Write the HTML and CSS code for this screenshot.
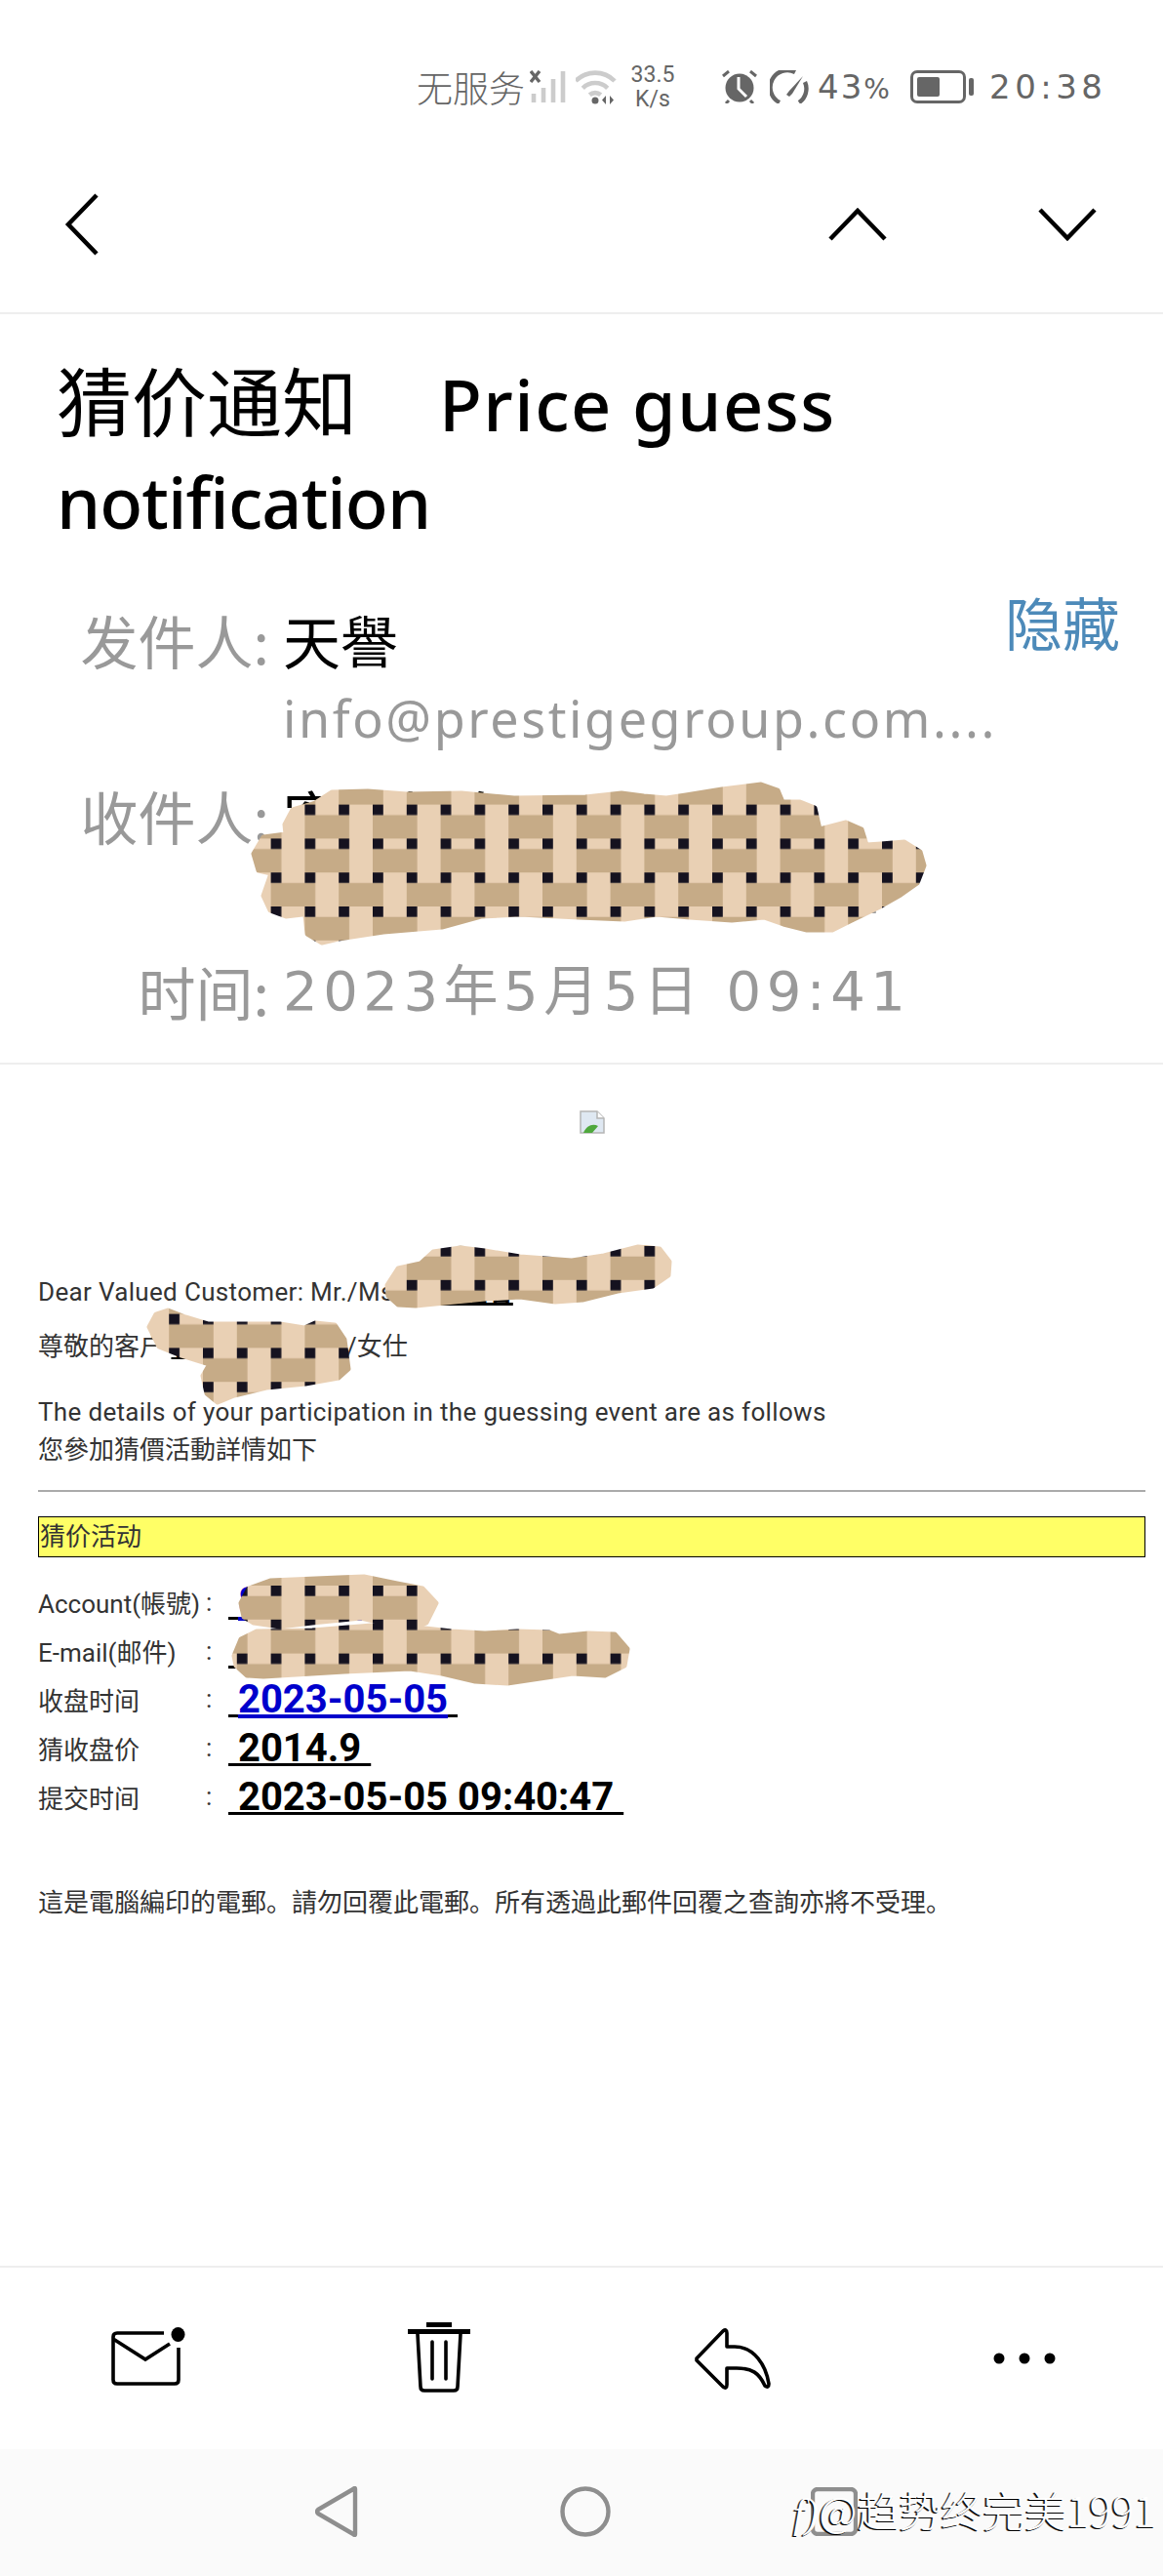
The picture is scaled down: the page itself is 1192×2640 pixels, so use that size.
FILE: index.html
```html
<!DOCTYPE html>
<html lang="zh">
<head>
    <meta charset="UTF-8">
    <title>猜价通知</title>
    <link rel="stylesheet" href="styles.css">
</head>
<body>

    <!-- status bar -->
    <div class="status-bar">
        <span class="carrier">无服务</span>
        <svg class="ic-signal" width="37" height="34" viewBox="0 0 37 34">
            <path d="M1 1l9 11M10 1L1 12" stroke="#666" stroke-width="3.4"/>
            <path d="M4 33V24M14 33V18M24 33V9M34 33V1" stroke="#ccc" stroke-width="4.6"/>
        </svg>
        <svg class="ic-wifi" width="42" height="36" viewBox="0 0 42 36">
            <g fill="none" stroke="#ccc" stroke-width="4.6">
                <path d="M0 12A28 28 0 0 1 40 12"/>
                <path d="M7.300 19.300A18 18 0 0 1 32.700 19.300"/>
                <path d="M14.300 26.300A8.500 8.500 0 0 1 25.700 26.300"/>
            </g>
            <circle cx="20" cy="32" r="3.500" fill="#666"/>
            <path d="M31 27v9l-4-4.500zM35 27v9l4-4.500z" fill="#666"/>
        </svg>
        <div class="speed"><span>33.5</span><span>K/s</span></div>
        <svg class="ic-alarm" width="36" height="34" viewBox="0 0 36 34">
            <path d="M1 6l6-5M35 6l-6-5M7 31l-3 3M29 31l3 3" stroke="#666" stroke-width="3"/>
            <circle cx="18" cy="18" r="14.500" fill="#666"/>
            <path d="M17 7v12l8 8" fill="none" stroke="#fff" stroke-width="3"/>
        </svg>
        <svg class="ic-gauge" width="40" height="34" viewBox="0 0 40 34">
            <path d="M10 33A17 17 0 0 1 26 2M36 12A17 17 0 0 1 30 33" fill="none" stroke="#666" stroke-width="4.400"/>
            <path d="M34 6L20 21l-3 4 3 2 3-3z" fill="#666"/>
        </svg>
        <span class="pct">43<small>%</small></span>
        <div class="battery"><div class="battery-fill"></div></div>
        <div class="battery-nub"></div>
        <span class="clock">20:38</span>
    </div>

    <!-- top nav -->
    <div class="top-nav">
        <svg width="36" height="64" viewBox="0 0 36 64">
            <path d="M33 2L4 32l29 30" fill="none" stroke="#000" stroke-width="4.500"/>
        </svg>
        <div class="top-nav-right">
            <svg width="60" height="34" viewBox="0 0 60 34">
                <path d="M2 32L30 3l28 29" fill="none" stroke="#000" stroke-width="4.500"/>
            </svg>
            <svg width="60" height="34" viewBox="0 0 60 34">
                <path d="M2 2l28 29L58 2" fill="none" stroke="#000" stroke-width="4.500"/>
            </svg>
        </div>
    </div>

    <!-- subject and addresses -->
    <div class="mail-head">
        <h1 class="subject"><span class="subject-cn">猜价通知</span>&nbsp;&nbsp;&nbsp;&nbsp;Price guess <span class="subject-tight">notification</span></h1>
        <div class="meta">
            <div class="meta-label">发件人:</div>
            <div class="meta-value">
                <div class="meta-name">天譽</div>
                <div class="meta-mail">info@prestigegroup.com....</div>
            </div>
            <a class="meta-hide">隐藏</a>

            <div class="meta-label">收件人:</div>
            <div class="meta-value">
                <div class="meta-name">客户姓名</div>
                <div class="meta-mail">customers@hotmail.all</div>
            </div>
            <div></div>

            <div class="meta-label meta-time">时间:</div>
            <div class="meta-value meta-date">2023年5月5日 09:41</div>
        </div>
    </div>

    <!-- message body -->
    <div class="mail-body">
        <div class="logo">
            <svg width="26" height="24" viewBox="0 0 26 24">
                <path d="M1 1h17l7 7v15H1z" fill="#dfe8f2" stroke="#b5b5b5" stroke-width="1.500"/>
                <path d="M18 1v7h7" fill="#fff" stroke="#b5b5b5" stroke-width="1.500"/>
                <path d="M4 23c3-8 10-10 15-7l-6 7z" fill="#4fa83d"/>
            </svg>
        </div>
        <p class="line greet">Dear Valued Customer: Mr./Ms <b class="hidden-name">客户姓名</b></p>
        <p class="line greet-cn">尊敬的客戶 <u class="hidden-name-cn">客户姓名</u> 先生/女仕</p>
        <p class="line intro">The details of your participation in the guessing event are as follows</p>
        <p class="line intro-cn">您參加猜價活動詳情如下</p>
        <hr class="rule">
        <div class="banner">猜价活动</div>
        <div class="fields">
            <div class="field-label">Account(帳號)</div><div>:</div>
            <div class="field-value"><u>&nbsp;<a class="blue">88888888</a>&nbsp;</u></div>
            <div class="field-label">E-mail(邮件)</div><div>:</div>
            <div class="field-value"><u>&nbsp;<a class="blue">customer@mail.com</a>&nbsp;</u></div>
            <div class="field-label">收盘时间</div><div>:</div>
            <div class="field-value"><u>&nbsp;<a class="blue">2023-05-05</a>&nbsp;</u></div>
            <div class="field-label">猜收盘价</div><div>:</div>
            <div class="field-value"><u>&nbsp;2014.9&nbsp;</u></div>
            <div class="field-label">提交时间</div><div>:</div>
            <div class="field-value"><u>&nbsp;2023-05-05 09:40:47&nbsp;</u></div>
        </div>
        <p class="line notice">這是電腦編印的電郵。請勿回覆此電郵。所有透過此郵件回覆之查詢亦將不受理。</p>
    </div>

    <!-- bottom actions -->
    <div class="toolbar">
        <svg class="ic-mail" width="76" height="60" viewBox="0 0 76 60">
            <path d="M54 6H6Q2 6 2 10V54Q2 58 6 58H65Q69 58 69 54V21" fill="none" stroke="#000" stroke-width="3.600"/>
            <path d="M2 12L35 33 60 17" fill="none" stroke="#000" stroke-width="3.600"/>
            <ellipse cx="68.500" cy="7.500" rx="7" ry="7.500"/>
        </svg>
        <svg class="ic-trash" width="64" height="72" viewBox="0 0 64 72">
            <path d="M19 0h26v5H19zM0 7h64v5H0z"/>
            <path d="M10 12l3 54q0 4 4 4h30q4 0 4-4l3-54" fill="none" stroke="#000" stroke-width="3.600"/>
            <path d="M25 20v38M39 20v38" stroke="#000" stroke-width="3.600" stroke-linecap="round"/>
        </svg>
        <svg width="79" height="63" viewBox="0 0 79 63">
            <path d="M3 31L30 3q4-3 4 2V19h8C62 19 74 38 77 57q0 5-4 2C67 46 60 41 44 41H34V58q0 5-4 2L3 33z" fill="none" stroke="#000" stroke-width="3.600" stroke-linejoin="round"/>
        </svg>
        <svg width="64" height="12" viewBox="0 0 64 12">
            <circle cx="6" cy="6" r="5.500"/>
            <circle cx="32" cy="6" r="5.500"/>
            <circle cx="58" cy="6" r="5.500"/>
        </svg>
    </div>

    <!-- system nav -->
    <div class="sys-nav">
        <svg width="44" height="52" viewBox="0 0 44 52">
            <path d="M41 3Q41 1 39 3L3 24q-2 2 0 4l36 21q2 2 2 0z" fill="none" stroke="#8e8e8e" stroke-width="4.400" stroke-linejoin="round"/>
        </svg>
        <svg width="52" height="52" viewBox="0 0 52 52">
            <circle cx="26" cy="26" r="23.500" fill="none" stroke="#8e8e8e" stroke-width="4.400"/>
        </svg>
        <svg width="48" height="50" viewBox="0 0 48 50">
            <rect x="2" y="2" width="44" height="46" rx="5" fill="none" stroke="#8e8e8e" stroke-width="4.400"/>
        </svg>
        <div class="watermark"><i>f)</i>@趋势终完美1991</div>
    </div>

    <!-- redaction scribbles painted over the address details -->
    <svg class="scribbles" width="1192" height="2640" viewBox="0 0 1192 2640">
        <defs>
            <pattern id="weave" patternUnits="userSpaceOnUse" x="277.600" y="824.600" width="69.600" height="104.400">
                <rect width="69.600" height="104.400" fill="#e9d0b4"/>
                <path d="M0 10.800h10.800v24H0zM34.800 10.800h34.800v24H34.800zM0 45.600h10.800v24H0zM34.800 45.600h34.800v24H34.800zM0 80.400h45.600v24H0z" fill="#c6ab87"/>
                <path d="M0 0h10.800v10.800H0zM34.800 0h10.800v10.800H34.800zM0 34.800h10.800v10.800H0zM34.800 34.800h10.800v10.800H34.800zM0 69.600h10.800v10.800H0zM34.800 69.600h10.800v10.800H34.800z" fill="#15121f"/>
            </pattern>
            <pattern id="weave-b" href="#weave" patternTransform="translate(0 -34.800)"></pattern>
            <pattern id="weave-c" href="#weave" patternTransform="translate(0 -69.600)"></pattern>
        </defs>
        <path class="scribble-a" d="M323 823L340 812 377 811 417 814 473 813 527 818 600 817 637 813 660 816 683 818 703 815 740 809 780 804 797 810 802 822 820 822 835 828 840 850 867 843 883 850 888 866 903 865 927 863 943 873 947 887 940 905 923 917 900 930 873 943 853 953 827 953 803 947 783 940 750 943 707 940 673 937 640 942 593 940 533 937 493 939 453 950 393 955 347 962 330 966 315 957 313 938 322 930 310 937 293 939 277 933 270 918 278 895 265 892 260 875 270 858 293 855 292 845 300 830 317 825z"/>
        <path class="scribble-b" d="M397 1317L408 1300 431 1295 444 1283 472 1279 497 1282 533 1288 586 1292 619 1287 654 1278 676 1280 686 1293 685 1307 669 1318 633 1323 597 1332 569 1334 533 1329 497 1331 426 1338 408 1337 398 1328z"/>
        <path class="scribble-b" d="M153 1360L160 1347 172 1343 190 1350 213 1357 287 1357 312 1361 323 1356 343 1358 353 1373 357 1403 347 1412 313 1418 273 1422 240 1430 223 1437 212 1428 208 1410 215 1398 183 1388 163 1380z"/>
        <path class="scribble-c" d="M247 1643L255 1628 277 1620 347 1617 373 1616 407 1623 433 1628 447 1643 437 1663 427 1667 400 1665 370 1658 320 1663 287 1667 260 1663 250 1657z"/>
        <path class="scribble-c" d="M240 1697L247 1680 263 1672 320 1671 393 1665 427 1668 463 1672 497 1674 530 1672 563 1673 573 1677 603 1674 630 1675 643 1690 640 1707 620 1717 587 1715 520 1725 487 1723 453 1715 420 1710 353 1713 270 1718 253 1717 242 1707z"/>
    </svg>

</body>
</html>
```

FILE: styles.css
```css
* {
    box-sizing: border-box;
}
html, body {
    margin: 0;
    padding: 0;
}
body {
    position: relative;
    display: flex;
    flex-direction: column;
    width: 1192px;
    height: 2640px;
    overflow: hidden;
    background-color: #fff;
    color: #333;
    font-family: 'Roboto', 'Noto Sans CJK TC', sans-serif;
}

/* status bar */
.status-bar {
    display: flex;
    align-items: center;
    height: 110px;
    padding: 68px 0 0 427px;
    color: #666;
    font-family: 'DejaVu Sans', 'Noto Sans CJK SC', sans-serif;
}
.carrier {
    font-family: 'Noto Sans CJK SC', sans-serif;
    font-weight: 300;
    font-size: 37px;
    line-height: 42px;
}
.ic-signal {
    margin-left: 5px;
}
.ic-wifi {
    margin-left: 10px;
}
.speed {
    display: flex;
    flex-direction: column;
    align-items: center;
    width: 50px;
    margin-left: 12px;
    font-family: 'Roboto', sans-serif;
    font-size: 23px;
    line-height: 25px;
}
.ic-alarm {
    margin-left: 46px;
}
.ic-gauge {
    margin-left: 13px;
}
.pct {
    margin-left: 9px;
    width: 85px;
    font-size: 34px;
    letter-spacing: 2px;
    white-space: nowrap;
}
.pct small {
    font-size: 28px;
    letter-spacing: 0;
}
.battery {
    width: 57px;
    height: 34px;
    margin-left: 10px;
    padding: 4px;
    border: 3px solid #666;
    border-radius: 7px;
}
.battery-fill {
    width: 23px;
    height: 100%;
    border-radius: 2px;
    background-color: #666;
}
.battery-nub {
    width: 5px;
    height: 18px;
    margin-left: 3px;
    border-radius: 2px;
    background-color: #666;
}
.clock {
    margin-left: 16px;
    font-size: 34px;
    letter-spacing: 4.5px;
}

/* top nav */
.top-nav {
    display: flex;
    justify-content: space-between;
    align-items: center;
    height: 212px;
    padding: 30px 68px 0 66px;
    border-bottom: 2px solid #eee;
}
.top-nav-right {
    display: flex;
    gap: 155px;
}

/* subject and addresses */
.mail-head {
    padding: 41px 44px 0 58px;
    height: 769px;
    border-bottom: 2px solid #eee;
}
.subject {
    margin: 0;
    color: #000;
    font-family: 'Noto Sans', 'Noto Sans CJK SC', sans-serif;
    font-weight: 500;
    font-size: 72px;
    line-height: 100px;
    letter-spacing: 1.5px;
}
.subject-cn {
    margin-right: 3px;
    font-size: 77px;
    font-weight: 400;
    letter-spacing: 0;
}
.subject-tight {
    letter-spacing: -0.9px;
}
.meta {
    display: grid;
    grid-template-columns: 218px minmax(0, 1fr) auto;
    column-gap: 14px;
    row-gap: 20px;
    margin-top: 52px;
    color: #999;
    font-family: 'Noto Sans CJK SC', sans-serif;
    font-size: 59px;
    line-height: 80px;
}
.meta-label {
    text-align: right;
}
.meta-name {
    color: #000;
}
.meta-mail {
    font-family: 'Noto Sans', sans-serif;
    font-size: 52px;
    letter-spacing: 2.6px;
    white-space: nowrap;
}
.meta-hide {
    margin-top: -19px;
    color: #4d8ab9;
    white-space: nowrap;
}
.meta-date {
    font-family: 'DejaVu Sans', 'Noto Sans CJK SC', sans-serif;
    font-size: 56px;
    letter-spacing: 5.5px;
    white-space: nowrap;
}

/* message body */
.mail-body {
    flex: 1;
    padding: 0 18px 0 39px;
    font-size: 26px;
}
.logo {
    display: flex;
    justify-content: center;
    padding-top: 47px;
    height: 213px;
}
.line {
    margin: 0;
    line-height: 40px;
    white-space: nowrap;
}
.greet, .intro {
    letter-spacing: 0.33px;
}
.greet-cn {
    margin-top: 16px;
    font-size: 26px;
}
.hidden-name {
    margin-left: 10px;
    color: #000;
    text-decoration: underline;
    text-decoration-thickness: 3px;
}
.hidden-name-cn {
    margin-right: 17px;
    color: #000;
    font-weight: 700;
}
.intro {
    margin-top: 27px;
}
.intro-cn {
    font-size: 26px;
    line-height: 39px;
}
.rule {
    height: 2px;
    margin: 21px 0 25px;
    border: 0;
    background-color: #aaa;
}
.banner {
    height: 42px;
    padding-left: 1px;
    border: 1px solid #000;
    background-color: #ffff66;
    font-size: 26px;
    line-height: 40px;
}
.fields {
    display: grid;
    grid-template-columns: 172px 23px 1fr;
    grid-auto-rows: 49.800px;
    align-items: center;
    margin-top: 21px;
    font-size: 26px;
}
.field-value {
    color: #000;
    font-weight: 700;
    font-size: 40px;
    line-height: 49px;
    white-space: nowrap;
}
.field-value u {
    text-decoration-thickness: 3px;
}
.blue {
    color: #0000cc;
    text-decoration: underline;
}
.notice {
    margin-top: 64px;
    font-size: 26px;
}

/* bottom actions */
.toolbar {
    display: grid;
    grid-template-columns: repeat(4, 300px);
    justify-items: center;
    align-items: center;
    height: 188px;
    margin-top: 0;
    border-top: 2px solid #eee;
}
.ic-mail {
    margin: 0 0 4px 4px;
}
.ic-trash {
    margin-bottom: 2px;
}

/* system nav */
.sys-nav {
    position: relative;
    display: grid;
    grid-template-columns: repeat(3, 255px);
    justify-content: center;
    justify-items: center;
    align-items: center;
    height: 130px;
    padding: 0 0 2px 8px;
    background-color: #fafafa;
}
.watermark {
    position: absolute;
    left: 813px;
    top: 36px;
    color: #fff;
    font-family: 'Noto Sans CJK SC', sans-serif;
    font-weight: 300;
    font-size: 43px;
    line-height: 50px;
    white-space: nowrap;
    text-shadow: -1px 1px 0 #000, -2px 1px 0 #555;
}
.watermark i {
    font-family: 'Liberation Serif', serif;
}

/* redaction scribbles */
.scribbles {
    position: absolute;
    top: 0;
    left: 0;
    pointer-events: none;
}
.scribbles path {
    stroke-width: 5;
    stroke-linejoin: round;
}
.scribble-a {
    fill: url(#weave);
    stroke: url(#weave);
}
.scribble-b {
    fill: url(#weave-b);
    stroke: url(#weave-b);
}
.scribble-c {
    fill: url(#weave-c);
    stroke: url(#weave-c);
}
```
